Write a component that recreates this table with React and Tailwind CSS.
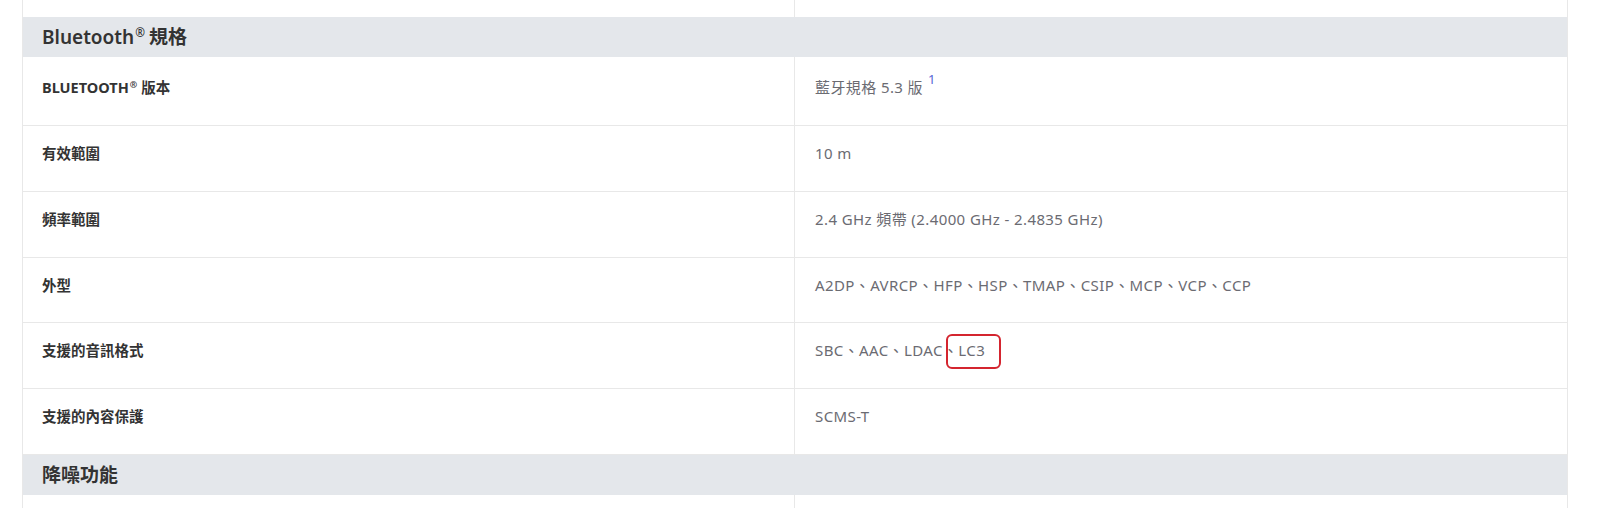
import React from 'react';

const font = { fontFamily: '"Noto Sans", "Noto Sans CJK TC", sans-serif' };

const Reg = () => <span className="text-[0.62em] align-[0.55em] ml-[1px] mr-[4px]">®</span>;

const rows = [
  { key: <>BLUETOOTH<Reg />版本</>, value: '藍牙規格 5.3 版', sup: '1', h: 'h-[69px]', pt: 'pt-[16px]' },
  { key: '有效範圍', value: '10 m', h: 'h-[66px]' },
  { key: '頻率範圍', value: '2.4 GHz 頻帶 (2.4000 GHz - 2.4835 GHz)', h: 'h-[66px]' },
  { key: '外型', value: 'A2DP、AVRCP、HFP、HSP、TMAP、CSIP、MCP、VCP、CCP', h: 'h-[65px]' },
  { key: '支援的音訊格式', value: 'SBC、AAC、LDAC、', mark: 'LC3', h: 'h-[66px]' },
  { key: '支援的內容保護', value: 'SCMS-T', h: 'h-[66px]' },
];

const Header = ({ children }) => (
  <div className="h-[40px] flex items-center bg-[#e4e7eb] px-[19px] text-[19px] font-semibold text-[#333]">
    <span>{children}</span>
  </div>
);

const SpecRow = ({ row }) => (
  <div className={`grid grid-cols-2 border-b border-[#e8e8e8] ${row.h}`}>
    <div className={`border-r border-[#e8e8e8] px-[19px] ${row.pt || 'pt-[15px]'} text-[14.5px] leading-6 font-bold text-[#333]`}>
      {row.key}
    </div>
    <div className={`px-[20px] ${row.pt || 'pt-[15px]'} text-[15px] leading-6 tracking-[0.4px] text-[#6b6b72]`}>
      {row.sup ? <span className="relative top-[2px]">{row.value}</span> : row.value}
      {row.sup && <sup className="ml-[5px] text-[13px] text-[#5a66d6] relative -top-[7px]">{row.sup}</sup>}
      {row.mark && (
        <span className="relative">
          {row.mark}
          <span className="absolute -left-[12px] -right-[16px] -top-[6px] -bottom-[9px] border-2 border-[#d4252f] rounded-[6px]" />
        </span>
      )}
    </div>
  </div>
);

export default function App() {
  return (
    <div className="bg-white w-[1600px] h-[508px] overflow-hidden" style={font}>
      <div className="ml-[22px] w-[1546px] border-x border-[#e8e8e8]">
        <div className="grid grid-cols-2 h-[17px]">
          <div className="border-r border-[#e8e8e8]" />
          <div />
        </div>
        <Header>Bluetooth<Reg />規格</Header>
        {rows.map((row, i) => (
          <SpecRow key={i} row={row} />
        ))}
        <Header>降噪功能</Header>
        <div className="grid grid-cols-2 h-[20px]">
          <div className="border-r border-[#e8e8e8]" />
          <div />
        </div>
      </div>
    </div>
  );
}
